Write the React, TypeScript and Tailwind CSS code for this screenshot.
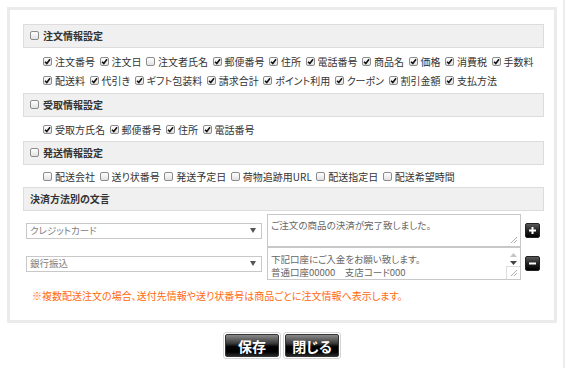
import React from "react";

function Cb({ checked }: { checked?: boolean }) {
  return (
    <span className="inline-flex h-[9px] w-[9px] shrink-0 items-center justify-center rounded-[2px] border border-[#8c8c8c] bg-linear-to-b from-white to-[#e2e2e2]">
      {checked && (
        <svg viewBox="0 0 8 8" className="h-[7px] w-[7px]">
          <path d="M1.2 4.2 L3.2 6.3 L6.9 1.4" stroke="#111" strokeWidth="1.8" fill="none" />
        </svg>
      )}
    </span>
  );
}

function Item({ label, checked }: { label: string; checked?: boolean }) {
  return (
    <span className="mr-[4.5px] inline-flex items-center">
      <Cb checked={checked} />
      <span className="ml-[3px]">{label}</span>
    </span>
  );
}

function Header({ label, box = true }: { label: string; box?: boolean }) {
  return (
    <div className="flex h-[24px] items-center border border-[#dcdcdc] bg-[#f0f0f0] pl-[6px] text-[10px] font-bold text-[#333]">
      {box && (
        <span className="mr-[4px]">
          <Cb />
        </span>
      )}
      <span>{label}</span>
    </div>
  );
}

function Row({ items }: { items: [string, boolean][] }) {
  return (
    <div className="flex h-[19px] items-center">
      {items.map(([l, c]) => (
        <Item key={l} label={l} checked={c} />
      ))}
    </div>
  );
}

function Grip() {
  return (
    <svg viewBox="0 0 8 8" className="absolute bottom-[2px] right-[2px] h-[8px] w-[8px]">
      <path d="M1 7 L7 1 M4 7 L7 4" stroke="#999" strokeWidth="0.8" fill="none" />
    </svg>
  );
}

function Select({ label }: { label: string }) {
  return (
    <div className="ml-[3px] flex h-[16px] w-[236px] items-center justify-between border border-[#c8c8c8] bg-white pl-[3px] pr-[5px] text-[9.5px] text-[#808080]">
      <span>{label}</span>
      <svg viewBox="0 0 6 5" className="h-[5px] w-[6px]">
        <path d="M0 0 L6 0 L3 5 Z" fill="#555" />
      </svg>
    </div>
  );
}

function SqBtn({ plus }: { plus?: boolean }) {
  return (
    <div className="ml-[4px] flex h-[15px] w-[15px] items-center justify-center rounded-[2px] border border-[#222] bg-[linear-gradient(#5a5a5a_0%,#222_50%,#000_100%)]">
      <svg viewBox="0 0 9 9" className="h-[9px] w-[9px]">
        <path d={plus ? "M1 4.5 H8 M4.5 1 V8" : "M1 4.5 H8"} stroke="#fff" strokeWidth="2" fill="none" />
      </svg>
    </div>
  );
}

function BigBtn({ label }: { label: string }) {
  return (
    <div className="rounded-[3px] border border-[#d4d4d4] p-[1px]">
      <div className="flex h-[23px] w-[54px] items-center justify-center rounded-[2px] border border-[#333] bg-[linear-gradient(#8a8a8a_0%,#3a3a3a_40%,#050505_55%,#000_80%,#2a2a2a_100%)] text-[14px] font-bold text-white">
        {label}
      </div>
    </div>
  );
}

export default function App() {
  return (
    <div className="h-[368px] w-[565px] border-r-2 border-[#ececec] bg-white pl-[7px] pt-[7px] font-['Noto_Sans_CJK_JP','Noto_Sans',sans-serif] text-[10px] leading-none text-[#333] [font-feature-settings:'palt']">
      <div className="h-[316px] w-[550px] border-[3px] border-[#ebebeb] bg-white pl-[13px] pr-[10px] pt-[14px]">
        <Header label="注文情報設定" />
        <div className="pb-[3px] pl-[20px] pt-[4px]">
          <Row
            items={[
              ["注文番号", true],
              ["注文日", true],
              ["注文者氏名", false],
              ["郵便番号", true],
              ["住所", true],
              ["電話番号", true],
              ["商品名", true],
              ["価格", true],
              ["消費税", true],
              ["手数料", true],
            ]}
          />
          <Row
            items={[
              ["配送料", true],
              ["代引き", true],
              ["ギフト包装料", true],
              ["請求合計", true],
              ["ポイント利用", true],
              ["クーポン", true],
              ["割引金額", true],
              ["支払方法", true],
            ]}
          />
        </div>
        <Header label="受取情報設定" />
        <div className="pb-[2px] pl-[20px] pt-[3px]">
          <Row
            items={[
              ["受取方氏名", true],
              ["郵便番号", true],
              ["住所", true],
              ["電話番号", true],
            ]}
          />
        </div>
        <Header label="発送情報設定" />
        <div className="pb-[1px] pl-[20px] pt-[2px]">
          <Row
            items={[
              ["配送会社", false],
              ["送り状番号", false],
              ["発送予定日", false],
              ["荷物追跡用URL", false],
              ["配送指定日", false],
              ["配送希望時間", false],
            ]}
          />
        </div>
        <Header label="決済方法別の文言" box={false} />
        <div className="pt-[3px]">
          <div className="flex h-[33px] items-center">
            <Select label="クレジットカード" />
            <div className="relative ml-[5px] h-[33px] w-[254px] border border-[#c8c8c8] bg-white pl-[3px] pt-[5px] text-[9.5px] leading-[11px] text-[#666]">
              ご注文の商品の決済が完了致しました。
              <Grip />
            </div>
            <SqBtn plus />
          </div>
          <div className="flex h-[33px] items-center">
            <Select label="銀行振込" />
            <div className="relative ml-[5px] h-[33px] w-[254px] border border-[#c8c8c8] bg-white pl-[3px] pt-[5px] text-[9.5px] leading-[13px] text-[#666]">
              <div>下記口座にご入金をお願い致します。</div>
              <div>普通口座00000　支店コード000</div>
              <div className="absolute right-0 top-0 flex h-full w-[14px] flex-col items-center">
                <svg viewBox="0 0 7 4" className="mt-[5px] h-[4px] w-[7px]">
                  <path d="M0 4 L7 4 L3.5 0 Z" fill="#c4c4c4" />
                </svg>
                <svg viewBox="0 0 7 4" className="mt-[4px] h-[4px] w-[7px]">
                  <path d="M0 0 L7 0 L3.5 4 Z" fill="#444" />
                </svg>
                <div className="absolute bottom-0 right-0 h-[13px] w-[14px] border-l border-t border-[#ddd] bg-white" />
              </div>
              <Grip />
            </div>
            <SqBtn />
          </div>
          <div className="mt-[8px] pl-[9px] text-[10px] leading-[16px] text-[#ff6a10]">
            ※複数配送注文の場合、送付先情報や送り状番号は商品ごとに注文情報へ表示します。
          </div>
        </div>
      </div>
      <div className="mt-[9px] flex w-[550px] justify-center gap-[2px]">
        <BigBtn label="保存" />
        <BigBtn label="閉じる" />
      </div>
    </div>
  );
}
